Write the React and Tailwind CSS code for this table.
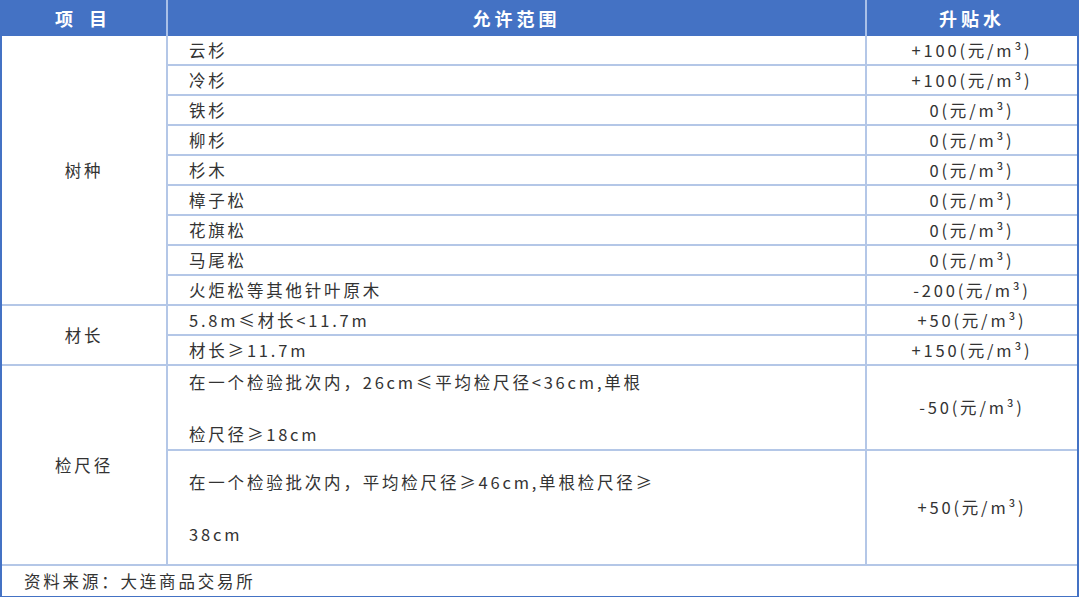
const species = [
  ['云杉', '+100(元/m³)'],
  ['冷杉', '+100(元/m³)'],
  ['铁杉', '0(元/m³)'],
  ['柳杉', '0(元/m³)'],
  ['杉木', '0(元/m³)'],
  ['樟子松', '0(元/m³)'],
  ['花旗松', '0(元/m³)'],
  ['马尾松', '0(元/m³)'],
  ['火炬松等其他针叶原木', '-200(元/m³)'],
];

const lengths = [
  ['5.8m≤材长<11.7m', '+50(元/m³)'],
  ['材长≥11.7m', '+150(元/m³)'],
];

const line = 'border-[#b4c7e7]';

export default function App() {
  return (
    <div className="w-[1080px] h-[597px] bg-white text-[#333333] text-[16.5px] tracking-[2.8px]" style={{ fontFamily: '"Noto Sans CJK SC", "Noto Sans", sans-serif' }}>
      <div className="grid grid-cols-[166px_699px_1fr] grid-rows-[36px_repeat(11,30px)_85px_115px_30px] w-[1079px] border-x-2 border-b-2 border-[#4472c4]">
        {/* header */}
        <div className="bg-[#4472c4] text-white font-bold text-[18px] flex items-center justify-center border-r-2 border-[#a9c0e8] tracking-[6px]">项 目</div>
        <div className="bg-[#4472c4] text-white font-bold text-[18px] tracking-[4px] flex items-center justify-center border-r-2 border-[#a9c0e8]">允许范围</div>
        <div className="bg-[#4472c4] text-white font-bold text-[18px] tracking-[4px] flex items-center justify-center">升贴水</div>

        <div className={`row-span-9 flex items-center justify-center border-r-2 border-b-2 ${line}`}>树种</div>
        {species.map(([name, val]) => (
          <div key={name} className="contents">
            <div className={`flex items-center pl-[21px] border-r-2 border-b-2 ${line}`}>{name}</div>
            <div className={`flex items-center justify-center border-b-2 ${line}`}>{val}</div>
          </div>
        ))}

        <div className={`row-span-2 flex items-center justify-center border-r-2 border-b-2 ${line}`}>材长</div>
        {lengths.map(([name, val]) => (
          <div key={name} className="contents">
            <div className={`flex items-center pl-[21px] border-r-2 border-b-2 ${line}`}>{name}</div>
            <div className={`flex items-center justify-center border-b-2 ${line}`}>{val}</div>
          </div>
        ))}

        <div className={`row-span-2 flex items-center justify-center border-r-2 border-b-2 ${line}`}>检尺径</div>
        <div className={`flex items-center pl-[21px] border-r-2 border-b-2 ${line}`}>
          <p className="leading-[52px] whitespace-nowrap">
            在一个检验批次内，26cm≤平均检尺径&lt;36cm,单根<br />检尺径≥18cm
          </p>
        </div>
        <div className={`flex items-center justify-center border-b-2 ${line}`}>-50(元/m³)</div>
        <div className={`flex items-center pl-[21px] border-r-2 border-b-2 ${line}`}>
          <p className="leading-[52px] whitespace-nowrap">
            在一个检验批次内，平均检尺径≥46cm,单根检尺径≥<br />38cm
          </p>
        </div>
        <div className={`flex items-center justify-center border-b-2 ${line}`}>+50(元/m³)</div>

        <div className="col-span-3 flex items-center pl-[22px]">资料来源：大连商品交易所</div>
      </div>
    </div>
  );
}
